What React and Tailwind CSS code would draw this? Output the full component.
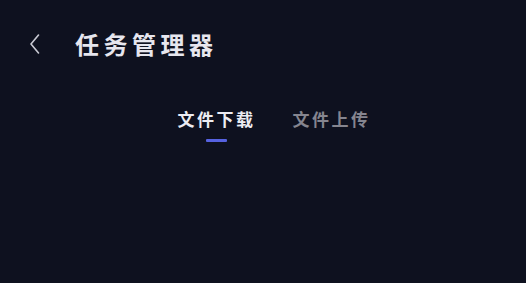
import React from 'react';

const App = () => {
  return (
    <div className="w-[526px] h-[283px] bg-[#0e111f] overflow-hidden" style={{ fontFamily: '"Noto Sans CJK SC", "Noto Sans", sans-serif' }}>
      {/* Header */}
      <div className="flex items-center h-[88px] pl-[28px]">
        <button className="w-[14px] h-[24px] flex items-center justify-center">
          <svg width="12" height="20" viewBox="0 0 12 20" fill="none">
            <path d="M9.5 1 L2 10 L9.5 19" stroke="#c9cad3" strokeWidth="1.6" strokeLinecap="round" strokeLinejoin="round" />
          </svg>
        </button>
        <h1 className="ml-[33px] text-[24px] font-bold tracking-[4.5px] text-[#e6e6ee] leading-none">任务管理器</h1>
      </div>

      {/* Tabs */}
      <div className="flex justify-center gap-[37px] mt-[22px] pl-[22px]">
        <div className="flex flex-col items-center">
          <span className="text-[17px] font-bold tracking-[2.5px] text-[#ececf2] leading-none">文件下载</span>
          <span className="mt-[12px] w-[21px] h-[3px] bg-[#5662e0] rounded-[1px]" />
        </div>
        <div className="flex flex-col items-center">
          <span className="text-[17px] font-bold tracking-[2.5px] text-[#85858f] leading-none">文件上传</span>
        </div>
      </div>
    </div>
  );
};

export default App;
